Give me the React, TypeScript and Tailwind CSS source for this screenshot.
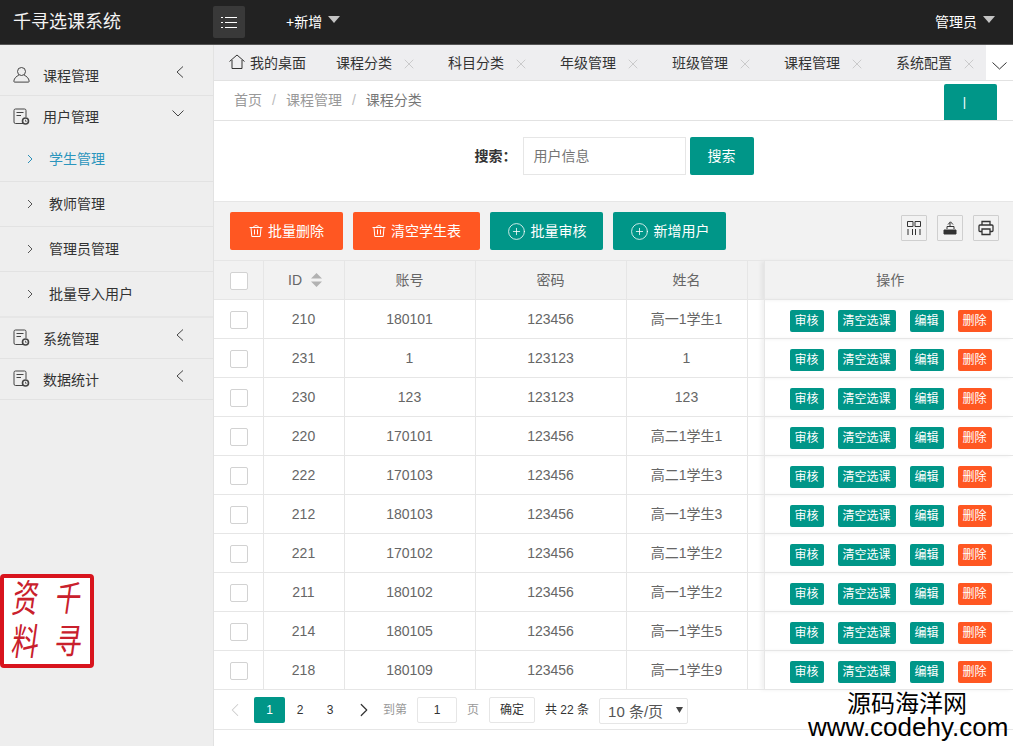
import React from "react";
import { CirclePlus, ChevronLeft, ChevronRight, X } from "lucide-react";

const fontStack = "[font-family:'Liberation_Sans','Noto_Sans_CJK_SC',sans-serif]";

const rows = [
  ["210", "180101", "123456", "高一1学生1"],
  ["231", "1", "123123", "1"],
  ["230", "123", "123123", "123"],
  ["220", "170101", "123456", "高二1学生1"],
  ["222", "170103", "123456", "高二1学生3"],
  ["212", "180103", "123456", "高一1学生3"],
  ["221", "170102", "123456", "高二1学生2"],
  ["211", "180102", "123456", "高一1学生2"],
  ["214", "180105", "123456", "高一1学生5"],
  ["218", "180109", "123456", "高一1学生9"],
];

function Caret({ className }: { className?: string }) {
  return (
    <svg width="12" height="7" viewBox="0 0 12 7" className={className}>
      <path d="M0 0H12L6 7Z" fill="#c4c4c4" />
    </svg>
  );
}

function UserIcon() {
  return (
    <svg width="17" height="17" viewBox="0 0 17 17" fill="none" stroke="#444" strokeWidth="1">
      <circle cx="8.5" cy="5.5" r="4" />
      <path d="M5.8 9.2C3.5 10.3 1.2 12 .8 15.2c0 .6.3.9.9.9h13.6c.6 0 .9-.3.9-.9-.4-3.2-2.700-4.900-5-6" />
    </svg>
  );
}

function FileIcon() {
  return (
    <svg width="17" height="17" viewBox="0 0 17 17" fill="none" stroke="#444" strokeWidth="1">
      <path d="M10 15.500H2.500a1.500 1.500 0 0 1-1.500-1.500V2.500A1.500 1.500 0 0 1 2.500 1h9A1.500 1.500 0 0 1 13 2.500V9" />
      <path d="M3.500 4.500H10.500M3.500 7.500H8" />
      <circle cx="12.500" cy="13" r="3" strokeWidth="1.600" />
      <path d="M12.500 11.800V13.300H13.600" strokeWidth=".8" />
    </svg>
  );
}

function TrashIcon() {
  return (
    <svg width="14" height="14" viewBox="0 0 14 14" fill="none" stroke="#fff" strokeWidth="1">
      <path d="M.5 3.500H13.500M4.500 3.500C4.500 1 9.500 1 9.500 3.500M2 3.500L2.800 12.500H11.200L12 3.500M5.500 5.500V10.500M8.500 5.500V10.500" />
    </svg>
  );
}

function SideChevron({ open }: { open?: boolean }) {
  return open ? (
    <svg width="12" height="7" viewBox="0 0 12 7" fill="none" stroke="#444" strokeWidth="1" className="mt-[-7px] ml-[-2px]">
      <path d="M.5 .5L6 6L11.500 .5" />
    </svg>
  ) : (
    <svg width="8" height="12" viewBox="0 0 8 12" fill="none" stroke="#444" strokeWidth="1" className="mt-[-7px]">
      <path d="M7 .5L1 6L7 11.500" />
    </svg>
  );
}

function SideItem({ label, icon, open }: { label: string; icon: React.ReactNode; open?: boolean }) {
  return (
    <div className={`flex h-[41px] items-center pl-[13px] pr-[29px] ${open ? "" : "border-b border-[#e2e2e2]"}`}>
      <span className="w-[30px] mt-[-1px] shrink-0">{icon}</span>
      <span className="flex-1 text-[14px] text-[#333] mt-[2px]">{label}</span>
      <SideChevron open={open} />
    </div>
  );
}

function SubItem({ label, active, last }: { label: string; active?: boolean; last?: boolean }) {
  return (
    <div className={`flex items-center pl-[27px] ${last ? "h-[46px] border-b-2 border-[#e6e6e6]" : "h-[45px] border-b border-[#e2e2e2]"}`}>
      <svg width="6" height="10" viewBox="0 0 6 10" fill="none" stroke={active ? "#2b8fb8" : "#555"} strokeWidth="1" className="mr-[16px] shrink-0">
        <path d="M1 1L5 5L1 9" />
      </svg>
      <span className={`text-[14px] ${active ? "text-[#2b95bd]" : "text-[#333]"}`}>{label}</span>
    </div>
  );
}

function Tab({ label, first }: { label: string; first?: boolean }) {
  return (
    <div className={`flex items-center shrink-0 pt-[2px] ${first ? "w-[122px] pl-[15px]" : "w-[112px]"}`}>
      {first && (
        <svg width="16" height="16" viewBox="0 0 16 16" fill="none" stroke="#333" strokeWidth="1" className="mr-[5px] mt-[-3px]">
          <path d="M.5 7.500L8 1L15.500 7.500M3 6V14.500H13V6" />
        </svg>
      )}
      <span className="text-[14px] text-[#333]">{label}</span>
      {!first && <X size={16} strokeWidth={1} color="#b8b8b8" className="ml-[9px]" />}
    </div>
  );
}

function ActionButton({ color, width, icon, label }: { color: string; width: string; icon: React.ReactNode; label: string }) {
  return (
    <button className={`h-[38px] rounded-[2px] text-white text-[14px] flex items-center justify-center gap-[5px] ${color} ${width}`}>
      {icon}
      {label}
    </button>
  );
}

function ToolBox({ children }: { children: React.ReactNode }) {
  return (
    <span className="flex h-[26px] w-[26px] items-center justify-center border border-[#cfcfcf] rounded-[1px]">{children}</span>
  );
}

function Mini({ label, color, width }: { label: string; color: string; width: string }) {
  return (
    <span className={`flex h-[22px] items-center justify-center rounded-[2px] text-[12px] text-white ${color} ${width}`}>{label}</span>
  );
}

function Box() {
  return <span className="inline-block align-middle h-[18px] w-[18px] rounded-[2px] border border-[#d2d2d2] bg-white" />;
}

export default function App() {
  return (
    <div className={`relative h-[746px] w-[1013px] overflow-hidden bg-white ${fontStack}`}>
      <header className="flex h-[45px] items-center border-b border-[#555] bg-[#222] text-white">
        <div className="w-[213px] pl-[13px] text-[18px] text-[#f4f4f4]">千寻选课系统</div>
        <div className="flex h-[32px] w-[32px] items-center justify-center rounded-[2px] bg-[#393939]">
          <svg width="16" height="11" viewBox="0 0 16 11" stroke="#fff" strokeWidth="1">
            <path d="M0 .5H2M4 .5H16M0 5.500H2M4 5.500H16M0 10.500H2M4 10.500H16" />
          </svg>
        </div>
        <div className="ml-[41px] flex items-center text-[14px]">
          +新增
          <Caret className="ml-[6px] mt-[-5px]" />
        </div>
        <div className="ml-auto mr-[18px] flex items-center text-[14px]">
          管理员
          <Caret className="ml-[6px] mt-[-5px]" />
        </div>
      </header>

      <div className="flex h-[701px]">
        <aside className="w-[214px] shrink-0 border-r border-[#e2e2e2] bg-[#eeeeee] pt-[10px]">
          <SideItem label="课程管理" icon={<UserIcon />} />
          <SideItem label="用户管理" icon={<FileIcon />} open />
          <SubItem label="学生管理" active />
          <SubItem label="教师管理" />
          <SubItem label="管理员管理" />
          <SubItem label="批量导入用户" last />
          <SideItem label="系统管理" icon={<FileIcon />} />
          <SideItem label="数据统计" icon={<FileIcon />} />
        </aside>

        <main className="flex-1 min-w-0">
          <div className="flex h-[36px] border-b border-[#e2e2e2] bg-[#eeeef0]">
            <div className="flex flex-1 overflow-hidden">
              <Tab label="我的桌面" first />
              <Tab label="课程分类" />
              <Tab label="科目分类" />
              <Tab label="年级管理" />
              <Tab label="班级管理" />
              <Tab label="课程管理" />
              <Tab label="系统配置" />
            </div>
            <div className="flex w-[27px] items-center justify-center bg-white pt-[6px]">
              <svg width="15" height="8" viewBox="0 0 15 8" fill="none" stroke="#333" strokeWidth="1">
                <path d="M.5 .5L7.500 7L14.500 .5" />
              </svg>
            </div>
          </div>

          <div className="flex h-[40px] items-center border-b border-[#e2e2e2] pl-[20px] pr-[16px] text-[14px]">
            <span className="text-[#999]">首页</span>
            <span className="mx-[10px] text-[#bbb]">/</span>
            <span className="text-[#999]">课程管理</span>
            <span className="mx-[10px] text-[#bbb]">/</span>
            <span className="text-[#777]">课程分类</span>
            <button className="ml-auto mt-[2px] flex h-[36px] w-[53px] items-center justify-center rounded-t-[2px] bg-[#009688] pr-[12px] text-[13px] font-light text-white">
              |
            </button>
          </div>

          <div className="flex h-[80px] items-start justify-center pl-[1px] pt-[16px]">
            <span className="mr-[6px] mt-[9px] text-[14px] font-bold text-[#333]">搜索：</span>
            <div className="flex h-[38px] w-[163px] items-center border border-[#e6e6e6] pl-[10px] text-[14px] text-[#757575]">用户信息</div>
            <button className="ml-[4px] h-[38px] w-[64px] rounded-[2px] bg-[#009688] text-[14px] text-white">搜索</button>
          </div>

          <div className="flex h-[59px] items-center gap-[10px] border-t border-[#e6e6e6] bg-[#f2f2f2] pl-[16px] pr-[14px]">
            <ActionButton color="bg-[#ff5722]" width="w-[113px]" icon={<TrashIcon />} label="批量删除" />
            <ActionButton color="bg-[#ff5722]" width="w-[127px]" icon={<TrashIcon />} label="清空学生表" />
            <ActionButton color="bg-[#009688]" width="w-[113px]" icon={<CirclePlus size={19} strokeWidth={1} />} label="批量审核" />
            <ActionButton color="bg-[#009688]" width="w-[113px]" icon={<CirclePlus size={19} strokeWidth={1} />} label="新增用户" />
            <div className="ml-auto mb-[6px] flex gap-[10px]">
              <ToolBox>
                <svg width="14" height="14" viewBox="0 0 14 14" fill="none" stroke="#333" strokeWidth="1">
                  <path d="M.5.500H6V5.500H.5ZM8 .500H13.500V5.500H8ZM1 8V14M5.500 8V14M8.500 8V14M13 8V14" />
                </svg>
              </ToolBox>
              <ToolBox>
                <svg width="14" height="14" viewBox="0 0 14 14" fill="none" stroke="#333" strokeWidth="1">
                  <path d="M7 6V1.500M5 3.500L7.500.800L10 3.500M4 8V5.500H11V8" />
                  <path d="M1 9H13V13H1Z" fill="#333" />
                </svg>
              </ToolBox>
              <ToolBox>
                <svg width="16" height="16" viewBox="0 0 16 16" fill="none" stroke="#333" strokeWidth="1.300">
                  <path d="M4 5V1.500H12V5M4 11.500H2a1 1 0 0 1-1-1V6a1 1 0 0 1 1-1H14a1 1 0 0 1 1 1V10.500a1 1 0 0 1-1 1H12M4 9H12V14.500H4Z" />
                </svg>
              </ToolBox>
            </div>
          </div>

          <table className="w-full table-fixed border-collapse text-[14px] text-[#666]">
            <colgroup>
              <col className="w-[49px]" />
              <col className="w-[81px]" />
              <col className="w-[131px]" />
              <col className="w-[151px]" />
              <col className="w-[121px]" />
              <col className="w-[17px]" />
              <col className="w-[249px]" />
            </colgroup>
            <thead>
              <tr className="h-[39px] bg-[#f2f2f2] text-center font-normal">
                <th className="border border-l-0 border-[#e6e6e6] pl-[1px] font-normal"><Box /></th>
                <th className="border border-[#e6e6e6] pl-[3px] font-normal">
                  <span className="inline-flex items-center gap-[9px]">
                    ID
                    <svg width="11" height="14" viewBox="0 0 11 14" fill="#b2b2b2"><path d="M5.500 0L11 5.500H0ZM0 8.500H11L5.500 14Z" /></svg>
                  </span>
                </th>
                <th className="border border-[#e6e6e6] font-normal">账号</th>
                <th className="border border-[#e6e6e6] font-normal">密码</th>
                <th className="border border-[#e6e6e6] font-normal">姓名</th>
                <th className="border border-[#e6e6e6] font-normal"></th>
                <th className="border border-r-0 border-[#e6e6e6] pl-[3px] font-normal shadow-[-3px_0_4px_rgba(0,0,0,0.06)]">操作</th>
              </tr>
            </thead>
            <tbody>
              {rows.map((r) => (
                <tr key={r[0]} className="h-[39px] text-center">
                  <td className="border border-l-0 border-[#e6e6e6] pl-[1px]"><Box /></td>
                  <td className="border border-[#e6e6e6]">{r[0]}</td>
                  <td className="border border-[#e6e6e6]">{r[1]}</td>
                  <td className="border border-[#e6e6e6]">{r[2]}</td>
                  <td className="border border-[#e6e6e6]">{r[3]}</td>
                  <td className="border border-[#e6e6e6]"></td>
                  <td className="border border-r-0 border-[#e6e6e6] shadow-[-3px_0_4px_rgba(0,0,0,0.06)]">
                    <div className="flex items-center gap-[14px] pl-[25px] pt-[4px]">
                      <Mini label="审核" color="bg-[#009688]" width="w-[34px]" />
                      <Mini label="清空选课" color="bg-[#009688]" width="w-[58px]" />
                      <Mini label="编辑" color="bg-[#009688]" width="w-[34px]" />
                      <Mini label="删除" color="bg-[#ff5722]" width="w-[34px]" />
                    </div>
                  </td>
                </tr>
              ))}
            </tbody>
          </table>

          <div className="flex h-[40px] items-center border-b border-[#e6e6e6] pl-[12px] text-[12px] text-[#666]">
            <ChevronLeft size={22} strokeWidth={1.100} color="#ccc" className="ml-[-2px]" />
            <span className="ml-[8px] flex h-[26px] w-[31px] items-center justify-center rounded-[2px] bg-[#009688] text-white">1</span>
            <span className="flex w-[30px] items-center justify-center text-[#333]">2</span>
            <span className="flex w-[30px] items-center justify-center text-[#333]">3</span>
            <ChevronRight size={22} strokeWidth={1.300} color="#333" className="ml-[8px]" />
            <span className="ml-[8px] text-[#999]">到第</span>
            <span className="ml-[10px] flex h-[26px] w-[40px] items-center justify-center rounded-[2px] border border-[#e6e6e6] text-[#333]">1</span>
            <span className="ml-[10px] text-[#999]">页</span>
            <span className="ml-[10px] flex h-[26px] w-[46px] items-center justify-center rounded-[2px] border border-[#e6e6e6] text-[#333]">确定</span>
            <span className="ml-[10px] text-[#333]">共 22 条</span>
            <span className="relative ml-[10px] mt-[2px] flex h-[26px] w-[89px] items-center rounded-[2px] border border-[#e6e6e6] pl-[8px] pt-[3px] text-[15px] text-[#555]">
              10 条/页
              <svg width="7" height="6" viewBox="0 0 7 6" className="absolute right-[4px] top-[8px]"><path d="M0 0H7L3.500 6Z" fill="#444" /></svg>
            </span>
          </div>
        </main>
      </div>

      {/* red seal */}
      <div className="absolute left-0 top-[574px] grid h-[94px] w-[94px] grid-cols-2 grid-rows-2 rounded-[4px] border-[4px] border-[#d8141d] bg-white text-center text-[32px] leading-[43px] text-[#c9202c]">
        <span className="[transform:skewX(-8deg)_scale(0.8,1.2)]">资</span>
        <span className="[transform:skewX(-8deg)_scale(0.8,1.1)]">千</span>
        <span className="[transform:skewX(-8deg)_scale(0.85,1.15)]">料</span>
        <span className="[transform:skewX(-8deg)_scale(0.85,1.1)]">寻</span>
      </div>

      {/* watermark */}
      <div className="absolute left-[847px] top-[692px] text-[24px] leading-[24px] text-black whitespace-nowrap">源码海洋网</div>
      <div className="absolute left-[808px] top-[716px] text-[26px] leading-[22px] text-black whitespace-nowrap">www.codehy.com</div>
    </div>
  );
}
